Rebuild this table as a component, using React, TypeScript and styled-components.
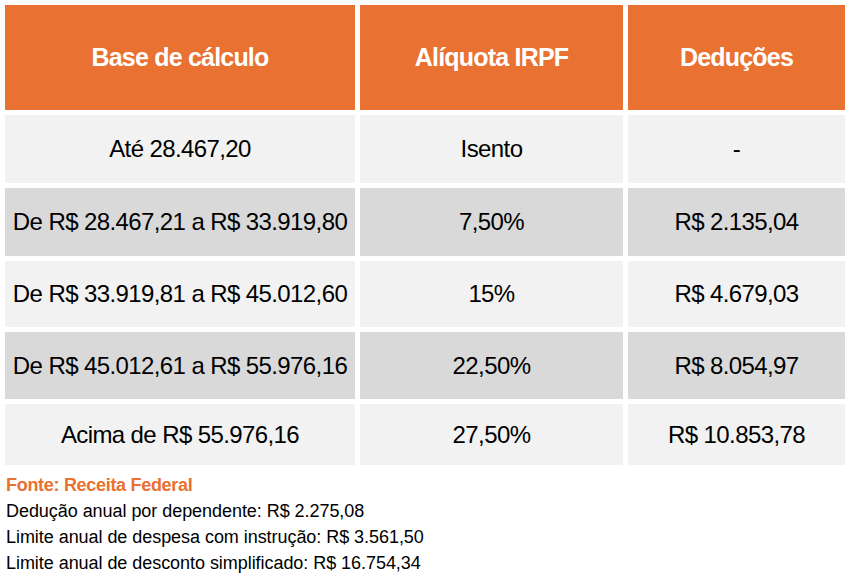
import React from "react";
import styled, { createGlobalStyle } from "styled-components";

const Global = createGlobalStyle`
  html, body { margin: 0; padding: 0; background: #ffffff; }
  body { font-family: "Liberation Sans", Arial, sans-serif; }
`;

const Page = styled.div`
  padding: 5px;
  width: 840px;
`;

const Table = styled.div`
  display: grid;
  grid-template-columns: 350px 263px 217px;
  grid-template-rows: 105px 68px 68px 66px 67px 61px;
  gap: 5px;
`;

const HeadCell = styled.div`
  background: #e97132;
  color: #ffffff;
  font-weight: 700;
  font-size: 25px;
  display: flex;
  align-items: center;
  justify-content: center;
  letter-spacing: -0.8px;
`;

const Cell = styled.div<{ $shade: boolean }>`
  background: ${(p) => (p.$shade ? "#d9d9d9" : "#f2f2f2")};
  color: #000000;
  font-size: 24px;
  display: flex;
  align-items: center;
  justify-content: center;
  letter-spacing: -0.6px;
`;

const Notes = styled.div`
  padding-top: 7px;
  font-size: 18px;
  line-height: 26px;
  color: #000000;
  padding-left: 1px;
`;

const Source = styled.div`
  color: #e97132;
  font-weight: 700;
  letter-spacing: -0.3px;
`;

const Line = styled.div`
  letter-spacing: -0.05px;
`;

const headers = ["Base de cálculo", "Alíquota IRPF", "Deduções"];
const rows = [
  ["Até 28.467,20", "Isento", "-"],
  ["De R$ 28.467,21 a R$ 33.919,80", "7,50%", "R$ 2.135,04"],
  ["De R$ 33.919,81 a R$ 45.012,60", "15%", "R$ 4.679,03"],
  ["De R$ 45.012,61 a R$ 55.976,16", "22,50%", "R$ 8.054,97"],
  ["Acima de R$ 55.976,16", "27,50%", "R$ 10.853,78"],
];

export default function App() {
  return (
    <>
      <Global />
      <Page>
        <Table>
          {headers.map((h) => (
            <HeadCell key={h}>{h}</HeadCell>
          ))}
          {rows.map((r, i) =>
            r.map((c, j) => (
              <Cell key={`${i}-${j}`} $shade={i % 2 === 1}>
                {c}
              </Cell>
            ))
          )}
        </Table>
        <Notes>
          <Source>Fonte: Receita Federal</Source>
          <Line>Dedução anual por dependente: R$ 2.275,08</Line>
          <Line>Limite anual de despesa com instrução: R$ 3.561,50</Line>
          <Line>Limite anual de desconto simplificado: R$ 16.754,34</Line>
        </Notes>
      </Page>
    </>
  );
}
